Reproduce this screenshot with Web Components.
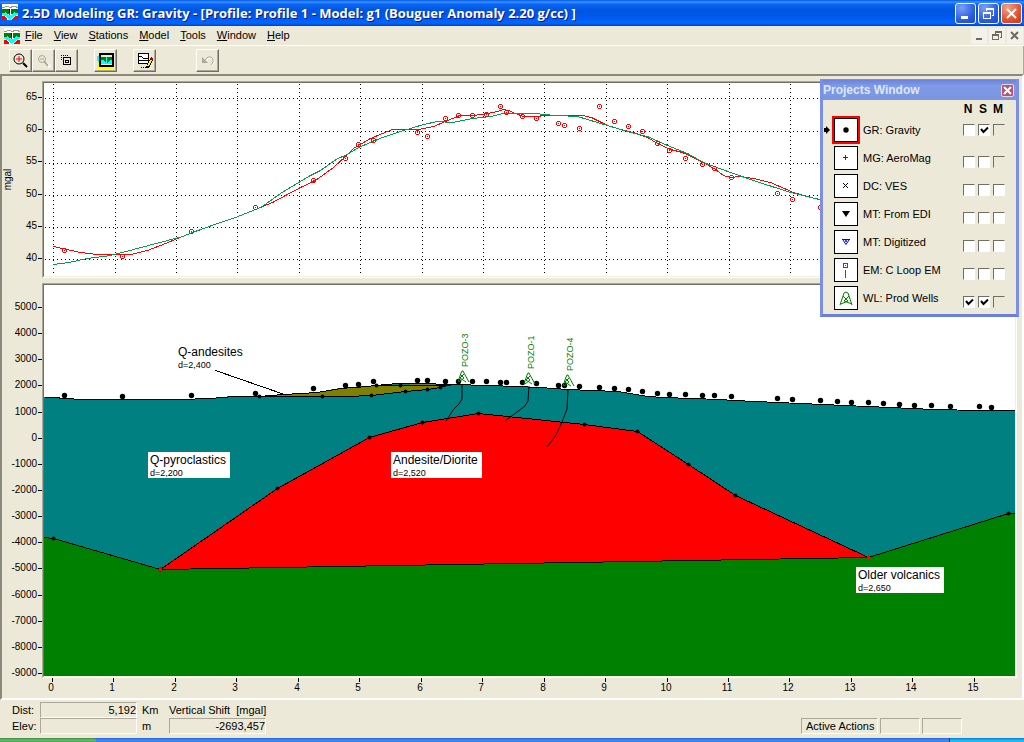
<!DOCTYPE html>
<html lang="en">
<head>
<meta charset="utf-8">
<title>2.5D Modeling GR: Gravity</title>
<style>
  html, body { margin: 0; }
  body {
    background: #ece9d8;
    color: #000;
    font: 11px/14px "Liberation Sans", Arial, sans-serif;
  }
</style>
</head>
<body>
<modeling-app></modeling-app>

<script>
const sheet = (css, html) => {
  const t = document.createElement('template');
  t.innerHTML = `<style>*{box-sizing:border-box}${css}</style>${html}`;
  return t;
};
class Base extends HTMLElement {
  constructor() {
    super();
    this.attachShadow({ mode: 'open' }).append(this.constructor.view.content.cloneNode(true));
  }
}

/* Cross-section logo, used in the title bar and the menu bar */
customElements.define('app-logo', class extends Base {
  static view = sheet(`:host{display:block;width:16px;height:16px}svg{display:block}`, `
    <svg width="16" height="16" viewBox="0 0 16 16" shape-rendering="crispEdges" aria-hidden="true">
      <path fill="#fff" d="M0 0h16v16H0z"/>
      <path fill="none" stroke="#999" d="M0 3.500h2l2-1h2l2 1 3-1h2l3 1"/>
      <path fill="#008000" d="M0 5h16v5H0z"/>
      <path fill="#0ff" d="M0 9h3v-1l4 3h2l4-3v1h3v2l-4 1-2 3H6l-2-3-4-1z"/>
      <path fill="#008000" d="M4 7h8l-3 4H7z"/>
      <path fill="#f00" d="M0 12h3l2 3v1H0zM16 12h-3l-3 3v1h6z"/>
      <path stroke="#fff" d="M8.500 5v6"/><path stroke="#000" d="M7.500 5v4"/>
    </svg>`);
});

customElements.define('title-bar', class extends Base {
  static view = sheet(`
    :host{display:flex;align-items:center;height:26px;gap:4px;padding:0 2px;
      background:linear-gradient(#0058e6 0,#3a93ff 8%,#0a66f3 16%,#0055e0 40%,#0058ee 65%,#0066ff 85%,#0060f0 92%,#003cc0)}
    app-logo{margin-bottom:2px}
    h1{flex:1;min-width:0;margin:0;overflow:hidden;white-space:nowrap;color:#fff;
      font:700 13px/18px "Open Sans",sans-serif;text-shadow:1px 1px #0a1883}
    .buttons{display:flex;gap:2px}
    button{width:21px;height:21px;padding:0;border:1px solid #fff;border-radius:3px;
      background:radial-gradient(circle at 30% 20%,#7ba0f6,#2b5ee4 60%,#1b49c8)}
    button.close{background:radial-gradient(circle at 30% 20%,#f2a189,#e0522d 60%,#c23a13)}
    svg{display:block;margin:auto}`, `
    <app-logo></app-logo>
    <h1>2.5D Modeling GR: Gravity - [Profile: Profile 1 - Model: g1 (Bouguer Anomaly 2.20 g/cc) ]</h1>
    <div class="buttons">
      <button aria-label="Minimize"><svg width="13" height="13" viewBox="0 0 13 13"><path fill="#fff" d="M2 9h7v3H2z"/></svg></button>
      <button aria-label="Restore"><svg width="13" height="13" viewBox="0 0 13 13"><path fill="#fff" d="M4 1h8v8h-2V8h1V3H5v1H4zM1 5h8v7H1zm1 2v4h6V7z"/></svg></button>
      <button class="close" aria-label="Close"><svg width="13" height="13" viewBox="0 0 13 13"><path stroke="#fff" stroke-width="2" d="M2 2l9 9M11 2l-9 9"/></svg></button>
    </div>`);
});

customElements.define('menu-bar', class extends Base {
  static view = sheet(`
    :host{display:flex;align-items:center;height:20px;padding:0 1px 0 4px;border-bottom:1px solid #fff}
    nav{display:flex;flex:1;gap:11px;padding:0 0 2px 5px}
    a{color:#000;text-decoration:none;white-space:nowrap}
    .buttons{display:flex;gap:2px}
    button{width:16px;height:16px;padding:0;border:0;background:#f3f2ea}
    svg{display:block;margin:auto}`, `
    <app-logo></app-logo>
    <nav aria-label="Main">
      <a href="#"><u>F</u>ile</a><a href="#"><u>V</u>iew</a><a href="#"><u>S</u>tations</a><a href="#"><u>M</u>odel</a>
      <a href="#"><u>T</u>ools</a><a href="#"><u>W</u>indow</a><a href="#"><u>H</u>elp</a>
    </nav>
    <div class="buttons">
      <button aria-label="Minimize document"><svg width="12" height="12" viewBox="0 0 12 12"><path fill="#6d6b5e" d="M3 8h6v2H3z"/></svg></button>
      <button aria-label="Restore document"><svg width="12" height="12" viewBox="0 0 12 12" shape-rendering="crispEdges"><path fill="#6d6b5e" d="M4 1h7v7H9V7h1V3H5v1H4zM1 4h7v6H1zm1 2v3h5V6z"/></svg></button>
      <button aria-label="Close document"><svg width="12" height="12" viewBox="0 0 12 12"><path stroke="#6d6b5e" stroke-width="2" d="M2 2l7 7M9 2l-7 7"/></svg></button>
    </div>`);
});

customElements.define('tool-bar', class extends Base {
  static view = sheet(`
    :host{display:flex;gap:16px;height:28px;padding:3px 8px 2px 9px;border-right:1px solid #aca899}
    .group{display:flex}
    .group:last-child{margin-left:24px}
    button{width:23px;height:23px;padding:0;background:#ece9d8;border:1px solid;
      border-color:#fff #716f64 #716f64 #fff;box-shadow:inset -1px -1px #aca899}
    svg{display:block;margin:auto}`, `
    <div class="group">
      <button aria-label="Zoom in"><svg width="18" height="18" viewBox="0 0 18 18"><circle cx="7" cy="7" r="5" fill="none" stroke="#000"/><path d="M7 4v6M4 7h6" stroke="#f00"/><path d="M11 11l4 4" stroke="#000" stroke-width="2"/></svg></button>
      <button aria-label="Zoom out" disabled><svg width="17" height="17" viewBox="0 0 17 17"><path d="M11 11l4 4" stroke="#fff" stroke-width="3"/><circle cx="7" cy="7" r="3.500" fill="none" stroke="#aca899"/><path d="M5 7h4" stroke="#aca899"/><path d="M9 9l4 5" stroke="#aca899" stroke-width="2"/></svg></button>
      <button aria-label="Zoom window"><svg width="19" height="19" viewBox="0 0 19 19" shape-rendering="crispEdges"><path fill="none" stroke="#000" stroke-dasharray="1 1" d="M4 4.500h8M4.500 4v5"/><path fill="none" stroke="#000" d="M6.500 6.500h7v7h-7zM8.500 9.500h3v2h-3z"/></svg></button>
    </div>
    <div class="group">
      <button aria-label="Model view"><svg width="17" height="17" viewBox="0 0 17 17" shape-rendering="crispEdges"><path fill="#0ff" d="M0 4h17v8H0z"/><path fill="#ff0" d="M0 12h17v5H0zM0 9l3 3H0z"/><path fill="#ece9d8" stroke="#000" stroke-width="2" d="M3 2h13v12H3z"/><path fill="#008000" d="M4 5h11v3H4z"/><path fill="#0ff" d="M4 8h11v4H4z"/><path fill="#008000" d="M5 7h4v4zM14 7h-4v4z"/><path fill="#0ff" d="M9 5h1v4H9z"/></svg></button>
    </div>
    <div class="group">
      <button aria-label="Edit model"><svg width="18" height="18" viewBox="0 0 18 18" shape-rendering="crispEdges"><path fill="#fff" stroke="#000" d="M2.500 1.500h10v10h-10z"/><path fill="none" stroke="#000" d="M2 4.500h3l3 2h4M2 8.500h10"/><path stroke="#000" stroke-dasharray="1 1" d="M5 15.500h6"/><path stroke="#000" stroke-width="3" d="M11 16l5-9"/><path stroke="#ff0" stroke-width="2" d="M12 14l3-6"/><path stroke="#a00" stroke-width="2" d="M15 6l2 2"/></svg></button>
    </div>
    <div class="group">
      <button aria-label="Undo" disabled><svg width="17" height="17" viewBox="0 0 17 17"><g fill="none" stroke="#fff" transform="translate(1 1)"><path d="M5 9l4-4h3l2 2v3l-2 3"/></g><path fill="none" stroke="#aca899" d="M5 9l4-4h3l2 2v3l-2 3"/><path fill="#aca899" d="M3 5v6h6z"/></svg></button>
    </div>`);
});

/* Axis drawn at the side of a plot: values are spread by percentage of its length */
customElements.define('plot-axis', class extends HTMLElement {
  connectedCallback() {
    const root = this.attachShadow({ mode: 'open' });
    const n = k => Number(this.getAttribute(k));
    const x = this.getAttribute('side') === 'bottom';
    const len = n('length'), first = n('first'), pitch = n('pitch');
    const marks = this.getAttribute('values').split(' ').map((v, i) => {
      const p = (Math.round(first + pitch * i) / len * 100).toFixed(3) + '%';
      return x
        ? `<svg x="${p}" overflow="visible"><path d="M.5 0v4"/><text x="-1" y="13" text-anchor="middle">${v}</text></svg>`
        : `<svg y="${p}" overflow="visible"><path d="M36 .5h4"/><text x="35" y="3" text-anchor="end">${v}</text></svg>`;
    }).join('');
    const unit = this.hasAttribute('unit')
      ? `<svg y="50%" overflow="visible"><text transform="translate(9 0) rotate(-90)" text-anchor="middle">${this.getAttribute('unit')}</text></svg>` : '';
    root.innerHTML = `<style>
      :host{display:block;position:relative;min-height:20px}
      .a{position:absolute;inset:0;width:100%;height:100%;overflow:visible}
      path{stroke:#000;shape-rendering:crispEdges}
      text{font:10px "Liberation Sans",Arial,sans-serif}
    </style><svg class="a">${marks}${unit}</svg>`;
  }
});

const frame = `
  :host{display:block;min-width:0;border:1px solid;border-color:#aca899 #fff #fff #aca899}
  div{border:1px solid;border-color:#716f64 #f1efe2 #f1efe2 #716f64;background:#fff}
  svg{display:block;width:100%;height:auto}
  text{font-family:"Liberation Sans",Arial,sans-serif}`;

/* Observed gravity stations with the two computed curves */
customElements.define('gravity-plot', class extends HTMLElement {
  connectedCallback() {
    const st = [[64,250],[122,256],[191,231],[255,207],[313,180],[345,158],[358,144],[373,140],[417,132],[427,136],[445,118],[458,115],[472,115],[486,114],[500,106],[506,112],[522,116],[536,118],[558,123],[564,125],[579,128],[599,106],[614,121],[628,126],[642,131],[657,143],[669,150],[685,158],[702,164],[714,168],[731,177],[777,193],[792,199],[820,207]];
    const vx = [53,115,176,237,299,360,422,483,544,606,667,729,790,851,913,974];
    const hy = [98,131,163,195,227,259];
    this.attachShadow({ mode: 'open' }).innerHTML = `<style>${frame}</style><div>
      <svg viewBox="44 83 971 193" shape-rendering="crispEdges" role="img" aria-label="Gravity profile">
        <g fill="none" transform="translate(.5 .5)">
          <path stroke="#000" stroke-dasharray="1 3" d="${vx.map(x => `M${x} 83.500V274`).join('')}${hy.map(y => `M44.500 ${y}H1015`).join('')}"/>
          <path stroke="#f00" d="M53 246L80 252 97 254H130L147 250 165 243 177 238 192 232 217 223 235 217 255 209 272 202 300 187 315 180 333 167 345 156 353 148 358 145 370 138 382 133 392 129H418L433 126 445 121 452 118 460 115H473L487 113 497 111 503 109 508 110 515 113 523 116H537L543 115H582L591 117 607 125 620 129 633 132 647 137 657 143 670 149 682 152 703 162 715 169 723 175 730 177 740 176 753 178 770 182 793 192 818 199 830 201"/>
          <path stroke="#009e4f" d="M53 264L68 262 87 258 110 255 133 249 167 240 182 236 200 229 220 222 235 217 260 207 266 203 280 193 308 176 320 170 337 158 345 155 358 147 382 137 400 131 423 124 437 121 452 122 472 118 490 116 503 113H537L542 114 557 115 577 116 607 125 630 132 647 136 667 145 687 153 703 162 730 172 753 180 790 192 819 199 830 201"/>
          ${st.map(([x, y]) => `<path stroke="#f00" d="M${x - 1} ${y - 2}h2l1 1v2l-1 1h-2l-1-1v-2z"/><path fill="#f00" d="M${x - .5} ${y - .5}h1v1h-1z"/>`).join('')}
        </g>
      </svg></div>`;
  }
});

/* Geological bodies, stations, wells and body labels */
customElements.define('section-plot', class extends HTMLElement {
  connectedCallback() {
    const st = [[64,395],[122,396],[191,395],[255,393],[313,388],[345,385],[358,384],[373,381],[417,380],[427,380],[445,381],[458,381],[472,381],[486,381],[500,382],[506,382],[522,382],[536,383],[558,385],[564,385],[579,386],[599,387],[614,388],[628,389],[642,391],[657,393],[669,394],[685,394],[702,395],[714,395],[731,396],[777,398],[792,399],[820,400],[837,401],[851,402],[868,402],[883,403],[899,404],[914,405],[931,405],[950,406],[979,406],[991,407]];
    const nodes = [[53,538],[160,569],[277,488],[369,437],[422,422],[478,413],[584,424],[637,431],[688,464],[735,495],[1008,513],[259,396],[322,396],[371,395],[376,385],[400,385],[405,391],[427,389],[440,387]];
    const top = '44 397 58 397 60 398 87 399 180 399 210 398 233 396 259 396 283 394 317 392 340 388 367 386 375 385 397 383 420 383 450 384 490 385 540 387 567 389 617 391 647 396 663 397 720 399 733 400 800 403 867 406 933 409 980 410 1015 410';
    const label = (x, y, w, name, d, fill) => `<rect x="${x}" y="${y}" width="${w}" height="26" fill="${fill}"/>
      <text x="${x + 2}" y="${y + 12}" font-size="12">${name}</text><text x="${x + 2}" y="${y + 24}" font-size="9">${d}</text>`;
    const well = (x, y, name, path) => `
      <path fill="none" stroke="#000" d="M${path}"/>
      <path fill="none" stroke="#008000" d="M${x - 4} ${y + 11}l3-9 1-2 1 0 1 2 5 9M${x - 2} ${y + 3}l4 4-5 4M${x + 2} ${y + 3}l-4 4 6 4"/>
      <text transform="translate(${x + 6} ${y - 4}) rotate(-90)" font-size="9" fill="#008000">${name}</text>`;
    this.attachShadow({ mode: 'open' }).innerHTML = `<style>${frame}</style><div>
      <svg viewBox="44 285 971 391" role="img" aria-label="Geological section">
        <g shape-rendering="crispEdges">
          <path fill="#008080" d="M${top} 1015 676 44 676z"/>
          <path fill="#008000" d="M44 537L53 538 160 569 868 557 1008 513H1015V676H44z"/>
          <path fill="#808000" d="M259 396L283 394 317 392 340 388 367 386 375 385 400 385 420 384 450 385 440 387 427 389 405 391 371 395 347 396z"/>
          <path fill="#f00" d="M160 569L277 488 369 437 422 422 478 413 584 424 637 431 688 464 735 495 868 557z"/>
          <g fill="none" stroke="#000" transform="translate(.5 .5)">
            <path d="M${top}"/>
            <path d="M259 396H347L371 395 405 391 427 389 440 387 450 384M375 385H450"/>
            <path d="M160 569L277 488 369 437 422 422 478 413 584 424 637 431 688 464 735 495 868 557z"/>
            <path d="M44 537L53 538 160 569M868 557L1008 513H1015"/>
            <path d="M215 370L284 394"/>
          </g>
        </g>
        <g transform="translate(.5 .5)">
          ${st.map(([x, y]) => `<circle cx="${x}" cy="${y}" r="2.700"/>`).join('')}
          ${nodes.map(([x, y]) => `<circle cx="${x}" cy="${y}" r="2"/>`).join('')}
          <circle cx="868" cy="557" r="2" fill="#f00"/><circle cx="160" cy="569" r="2" fill="#f00"/>
        </g>
        ${well(462, 371, 'POZO-3', '462 384V399L459 404 453 410 446 421')}
        ${well(528, 373, 'POZO-1', '529 386L528 401 525 406 505 421')}
        ${well(567, 375, 'POZO-4', '568 389L567 409 562 422 556 435 547 447')}
        ${label(176, 344, 72, 'Q-andesites', 'd=2,400', 'none')}
        ${label(148, 452, 82, 'Q-pyroclastics', 'd=2,200', '#fff')}
        ${label(391, 452, 91, 'Andesite/Diorite', 'd=2,520', '#fff')}
        ${label(856, 567, 88, 'Older volcanics', 'd=2,650', '#fff')}
      </svg></div>`;
  }
});

/* One survey in the projects window: symbol, name and the N / S / M boxes */
customElements.define('project-row', class extends HTMLElement {
  connectedCallback() {
    const name = this.getAttribute('name');
    const on = this.getAttribute('on') || '';
    const off = this.hasAttribute('fixed');
    this.attachShadow({ mode: 'open' }).innerHTML = `<style>
      *{box-sizing:border-box}
      :host{display:grid;grid-template-columns:11px 24px 1fr auto;height:24px;align-items:center;padding-right:11px}
      .sym{width:24px;height:24px;background:#fff;border:1px solid #000}
      :host([current]) .sym{outline:2px solid #f00}
      ::slotted(svg){display:block;width:22px;height:22px}
      .arrow{display:block}
      .name{padding-left:5px;white-space:nowrap}
      .boxes{display:flex;gap:3px;padding-top:8px}
      :host([current]) .boxes{padding-top:0}
      input{appearance:none;width:12px;height:12px;margin:0;background:#fff;
        border:1px solid;border-color:#716f64 #fff #fff #716f64}
      input:disabled{background:#ece9d8;border-color:#716f64 #ece9d8 #ece9d8 #716f64}
      input:checked{background:#fff url("data:image/svg+xml,%3Csvg xmlns='http://www.w3.org/2000/svg' width='10' height='10'%3E%3Cpath d='M2 4l2.500 3L9 2.500' fill='none' stroke='%23000' stroke-width='2'/%3E%3C/svg%3E")}
    </style>
    <span>${this.hasAttribute('current') ? '<svg class="arrow" width="8" height="8" viewBox="0 0 8 8"><path d="M1 2h2V0l4 4-4 4V6H1z"/></svg>' : ''}</span>
    <span class="sym"><slot></slot></span>
    <span class="name">${name}</span>
    <span class="boxes">${['N', 'S', 'M'].map(c =>
      `<input type="checkbox" aria-label="${name} ${c}"${on.includes(c) ? ' checked' : ''}${off && c === 'M' ? ' disabled' : ''}>`).join('')}</span>`;
  }
});

customElements.define('projects-window', class extends Base {
  static view = sheet(`
    :host{display:block;width:199px;border:3px solid #7b8fe6;border-top-width:1px;border-bottom-color:#6b7fdc;background:#ece9d8;color:#000}
    header{display:flex;align-items:center;justify-content:space-between;height:20px;padding-right:2px;
      background:linear-gradient(#6a83dd,#7f9be8 30%,#7a96df)}
    h2{margin:0;color:#dde7fc;font:700 12px/16px "Liberation Sans",Arial,sans-serif}
    button{width:13px;height:13px;padding:0;border:1px solid #e6d6e4;border-radius:2px;background:#b5566e}
    button svg{display:block;margin:auto}
    .heads{display:flex;justify-content:flex-end;gap:3px;height:18px;padding:2px 12px 0 0;font:700 12px/14px "Liberation Sans",Arial,sans-serif}
    .heads span{width:12px;text-align:center}
    .rows{display:grid;gap:4px;padding-bottom:4px}`, `
    <header><h2>Projects Window</h2><button aria-label="Close"><svg width="9" height="9" viewBox="0 0 9 9"><path stroke="#fff" stroke-width="2" d="M1 1l7 7M8 1L1 8"/></svg></button></header>
    <div class="heads"><span>N</span><span>S</span><span>M</span></div>
    <div class="rows">
      <project-row name="GR: Gravity" on="S" current fixed><svg viewBox="0 0 22 22"><circle cx="11" cy="11" r="2.700"/></svg></project-row>
      <project-row name="MG: AeroMag" fixed><svg viewBox="0 0 22 22"><path stroke="#800080" d="M8 10.500h5M10.500 8v5"/></svg></project-row>
      <project-row name="DC: VES"><svg viewBox="0 0 22 22"><path stroke="#000" d="M8 8l5 5M13 8l-5 5"/></svg></project-row>
      <project-row name="MT: From EDI"><svg viewBox="0 0 22 22"><path d="M7 8h8l-4 6z"/></svg></project-row>
      <project-row name="MT: Digitized"><svg viewBox="0 0 22 22"><path fill="none" stroke="#00f" d="M7 8.500h8M8 9l3 4.500L14 9"/><circle cx="11" cy="10" r="1" fill="#00f"/></svg></project-row>
      <project-row name="EM: C Loop EM"><svg viewBox="0 0 22 22" shape-rendering="crispEdges"><path fill="none" stroke="#f00" d="M8.500 4.500h4v4h-4zM10.500 11v8M10 6.500h1"/></svg></project-row>
      <project-row name="WL: Prod Wells" on="NS" fixed><svg viewBox="0 0 22 22"><path fill="none" stroke="#008000" d="M5 18L9 6l2-1 2 1 4 12M8 9l5 5-7 3M14 9l-5 5 8 3"/></svg></project-row>
    </div>`);
});

customElements.define('work-space', class extends Base {
  static view = sheet(`
    :host{display:grid;grid-template-columns:40px minmax(0,1fr);position:relative;padding:5px 5px 0 0;
      border:2px solid;border-color:#8b897c #fff #fff #8b897c}
    gravity-plot{margin-bottom:5px}
    plot-axis[unit]{margin-bottom:5px}
    plot-axis[side=bottom]{grid-column:2;height:20px}
    projects-window{position:absolute;top:3px;right:3px}`, `
    <plot-axis values="65 60 55 50 45 40" first="16" pitch="32.200" length="197" unit="mgal"></plot-axis>
    <gravity-plot></gravity-plot>
    <plot-axis values="5000 4000 3000 2000 1000 0 -1000 -2000 -3000 -4000 -5000 -6000 -7000 -8000 -9000" first="24" pitch="26.140" length="395"></plot-axis>
    <section-plot></section-plot>
    <plot-axis side="bottom" values="0 1 2 3 4 5 6 7 8 9 10 11 12 13 14 15" first="10" pitch="61.450" length="975"></plot-axis>
    <projects-window></projects-window>`);
});

customElements.define('status-bar', class extends Base {
  static view = sheet(`
    :host{display:flex;justify-content:space-between;align-items:flex-end;padding:2px 62px 4px 12px;height:38px}
    .read{display:grid;grid-template-columns:28px 97px 32px 97px;grid-auto-rows:16px;align-items:center}
    .read>.unit{padding-left:5px}
    .wide{white-space:nowrap}
    input,.cell{height:16px;border:1px solid;border-color:#aca899 #fff #fff #aca899;background:transparent}
    input{width:100%;min-width:0;padding:0;font:inherit;text-align:right;color:#000}
    .cells{display:flex;gap:2px}
    .cell{width:40px}.cell.text{width:77px;padding-left:4px;white-space:nowrap}`, `
    <div class="read">
      <label for="dist">Dist:</label><input id="dist" value="5,192" readonly><span class="unit">Km</span>
      <label class="wide" for="shift">Vertical Shift&nbsp; [mgal]</label>
      <label for="elev">Elev:</label><input id="elev" value="" readonly><span class="unit">m</span>
      <input id="shift" value="-2693,457" readonly>
    </div>
    <div class="cells"><span class="cell text">Active Actions</span><span class="cell"></span><span class="cell"></span></div>`);
});

customElements.define('task-strip', class extends Base {
  static view = sheet(`
    :host{display:flex;height:4px;background:linear-gradient(#2a5fd0,#3f8cf3 50%,#3a80ea)}
    .start{width:96px;background:linear-gradient(#3f8a45,#6dbb6b 60%,#4a9e4a);border-radius:0 3px 0 0}
    .tray{width:75px;margin-left:auto;background:linear-gradient(#0c6fd0,#18b9f5 50%);border-left:1px solid #0a3a90}`, `
    <span class="start"></span><span class="tray"></span>`);
});

customElements.define('modeling-app', class extends Base {
  static view = sheet(`:host{display:flex;flex-direction:column;min-height:100vh}task-strip{margin-top:auto}`, `
    <title-bar></title-bar><menu-bar></menu-bar><tool-bar></tool-bar>
    <work-space></work-space><status-bar></status-bar><task-strip></task-strip>`);
});
</script>
</body>
</html>
